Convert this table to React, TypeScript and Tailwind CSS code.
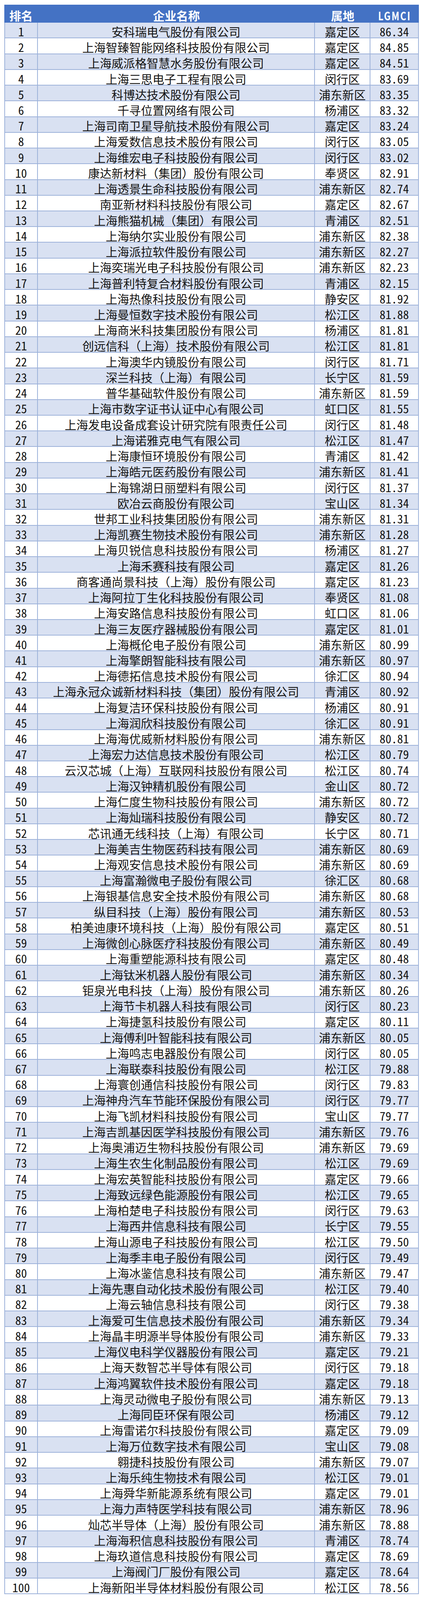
import React from "react";

const RAW = `安科瑞电气股份有限公司|嘉定区|86.34
上海智臻智能网络科技股份有限公司|嘉定区|84.85
上海威派格智慧水务股份有限公司|嘉定区|84.51
上海三思电子工程有限公司|闵行区|83.69
科博达技术股份有限公司|浦东新区|83.35
千寻位置网络有限公司|杨浦区|83.32
上海司南卫星导航技术股份有限公司|嘉定区|83.24
上海爱数信息技术股份有限公司|闵行区|83.05
上海维宏电子科技股份有限公司|闵行区|83.02
康达新材料（集团）股份有限公司|奉贤区|82.91
上海透景生命科技股份有限公司|浦东新区|82.74
南亚新材料科技股份有限公司|嘉定区|82.67
上海熊猫机械（集团）有限公司|青浦区|82.51
上海纳尔实业股份有限公司|浦东新区|82.38
上海派拉软件股份有限公司|浦东新区|82.27
上海奕瑞光电子科技股份有限公司|浦东新区|82.23
上海普利特复合材料股份有限公司|青浦区|82.15
上海热像科技股份有限公司|静安区|81.92
上海曼恒数字技术股份有限公司|松江区|81.88
上海商米科技集团股份有限公司|杨浦区|81.81
创远信科（上海）技术股份有限公司|松江区|81.81
上海澳华内镜股份有限公司|闵行区|81.71
深兰科技（上海）有限公司|长宁区|81.59
普华基础软件股份有限公司|浦东新区|81.59
上海市数字证书认证中心有限公司|虹口区|81.55
上海发电设备成套设计研究院有限责任公司|闵行区|81.48
上海诺雅克电气有限公司|松江区|81.47
上海康恒环境股份有限公司|青浦区|81.42
上海皓元医药股份有限公司|浦东新区|81.41
上海锦湖日丽塑料有限公司|闵行区|81.37
欧冶云商股份有限公司|宝山区|81.34
世邦工业科技集团股份有限公司|浦东新区|81.31
上海凯赛生物技术股份有限公司|浦东新区|81.28
上海贝锐信息科技股份有限公司|杨浦区|81.27
上海禾赛科技有限公司|嘉定区|81.26
商客通尚景科技（上海）股份有限公司|嘉定区|81.23
上海阿拉丁生化科技股份有限公司|奉贤区|81.08
上海安路信息科技股份有限公司|虹口区|81.06
上海三友医疗器械股份有限公司|嘉定区|81.01
上海概伦电子股份有限公司|浦东新区|80.99
上海擎朗智能科技有限公司|浦东新区|80.97
上海德拓信息技术股份有限公司|徐汇区|80.94
上海永冠众诚新材料科技（集团）股份有限公司|青浦区|80.92
上海复洁环保科技股份有限公司|杨浦区|80.91
上海润欣科技股份有限公司|徐汇区|80.91
上海海优威新材料股份有限公司|浦东新区|80.81
上海宏力达信息技术股份有限公司|松江区|80.79
云汉芯城（上海）互联网科技股份有限公司|松江区|80.74
上海汉钟精机股份有限公司|金山区|80.72
上海仁度生物科技股份有限公司|浦东新区|80.72
上海灿瑞科技股份有限公司|静安区|80.72
芯讯通无线科技（上海）有限公司|长宁区|80.71
上海美吉生物医药科技有限公司|浦东新区|80.69
上海观安信息技术股份有限公司|浦东新区|80.69
上海富瀚微电子股份有限公司|徐汇区|80.68
上海银基信息安全技术股份有限公司|浦东新区|80.68
纵目科技（上海）股份有限公司|浦东新区|80.53
柏美迪康环境科技（上海）股份有限公司|嘉定区|80.51
上海微创心脉医疗科技股份有限公司|浦东新区|80.49
上海重塑能源科技有限公司|嘉定区|80.48
上海钛米机器人股份有限公司|浦东新区|80.34
钜泉光电科技（上海）股份有限公司|浦东新区|80.26
上海节卡机器人科技有限公司|闵行区|80.23
上海捷氢科技股份有限公司|嘉定区|80.11
上海傅利叶智能科技有限公司|浦东新区|80.05
上海鸣志电器股份有限公司|闵行区|80.05
上海联泰科技股份有限公司|松江区|79.88
上海寰创通信科技股份有限公司|闵行区|79.83
上海神舟汽车节能环保股份有限公司|闵行区|79.77
上海飞凯材料科技股份有限公司|宝山区|79.77
上海吉凯基因医学科技股份有限公司|浦东新区|79.76
上海奥浦迈生物科技股份有限公司|浦东新区|79.69
上海生农生化制品股份有限公司|松江区|79.69
上海宏英智能科技股份有限公司|嘉定区|79.66
上海致远绿色能源股份有限公司|松江区|79.65
上海柏楚电子科技股份有限公司|闵行区|79.63
上海西井信息科技有限公司|长宁区|79.55
上海山源电子科技股份有限公司|松江区|79.50
上海季丰电子股份有限公司|闵行区|79.49
上海冰鉴信息科技有限公司|浦东新区|79.47
上海先惠自动化技术股份有限公司|松江区|79.40
上海云轴信息科技有限公司|闵行区|79.38
上海爱可生信息技术股份有限公司|浦东新区|79.34
上海晶丰明源半导体股份有限公司|浦东新区|79.33
上海仪电科学仪器股份有限公司|嘉定区|79.21
上海天数智芯半导体有限公司|闵行区|79.18
上海鸿翼软件技术股份有限公司|嘉定区|79.18
上海灵动微电子股份有限公司|浦东新区|79.13
上海同臣环保有限公司|杨浦区|79.12
上海雷诺尔科技股份有限公司|嘉定区|79.09
上海万位数字技术有限公司|宝山区|79.08
翱捷科技股份有限公司|浦东新区|79.07
上海乐纯生物技术有限公司|松江区|79.01
上海舜华新能源系统有限公司|嘉定区|79.01
上海力声特医学科技有限公司|浦东新区|78.96
灿芯半导体（上海）股份有限公司|浦东新区|78.88
上海海积信息科技股份有限公司|青浦区|78.74
上海玖道信息科技股份有限公司|嘉定区|78.69
上海阀门厂股份有限公司|嘉定区|78.64
上海新阳半导体材料股份有限公司|松江区|78.56`;

const rows = RAW.split("\n").map((line, i) => {
  const [name, area, score] = line.split("|");
  return { rank: i + 1, name, area, score };
});

const CJK = "font-['Noto_Sans_CJK_SC',sans-serif]";
const NUM = "font-['Noto_Sans_Mono_CJK_SC','Noto_Sans_CJK_SC','Liberation_Sans',monospace]";

export default function App() {
  return (
    <div className="grid h-screen w-full overflow-hidden bg-white grid-rows-[12fr_47fr_repeat(100,40.75fr)_15fr]">
      <div className="min-h-0" />
      <div className="min-h-0 ml-[1.02%] w-[98.24%] grid grid-cols-[86fr_709fr_142fr_124fr] bg-[#4472C4] text-white font-bold text-[30px] leading-none">
        <div className={`flex items-center justify-center pt-[8px] ${CJK}`}>排名</div>
        <div className={`flex items-center justify-center pt-[8px] ${CJK}`}>企业名称</div>
        <div className={`flex items-center justify-center pt-[8px] ${CJK}`}>属地</div>
        <div className={`flex items-center justify-center pt-[8px] ${CJK}`}>
          <span className="inline-block scale-x-[0.78] tracking-[3px]">LGMCI</span>
        </div>
      </div>
      {rows.map((r) => (
        <div
          key={r.rank}
          className={`min-h-0 ml-[1.02%] w-[98.24%] grid grid-cols-[84fr_709fr_142fr_122fr] border-l-2 border-r-2 border-b-2 border-[#9DB2DA] text-[30px] leading-none text-[#141414] ${
            r.rank % 2 === 1 ? "bg-[#D9E1F2]" : "bg-white"
          }`}
        >
          <div className={`min-w-0 border-r-2 border-[#9DB2DA] flex items-center justify-center pt-[5px] ${NUM}`}>
            {r.rank}
          </div>
          <div className={`min-w-0 border-r-2 border-[#9DB2DA] flex items-center justify-center pt-[5px] whitespace-nowrap ${CJK}`}>
            {r.name}
          </div>
          <div className={`min-w-0 border-r-2 border-[#9DB2DA] flex items-center justify-center pt-[5px] whitespace-nowrap ${CJK}`}>
            {r.area}
          </div>
          <div className={`min-w-0 flex items-center justify-center pt-[5px] ${NUM}`}>{r.score}</div>
        </div>
      ))}
      <div className="min-h-0" />
    </div>
  );
}
